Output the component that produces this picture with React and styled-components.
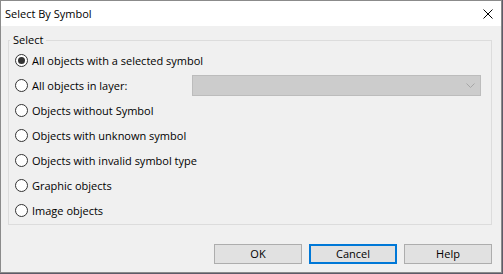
import React from "react";
import styled, { createGlobalStyle } from "styled-components";

const Global = createGlobalStyle`
  html, body { margin: 0; padding: 0; background: #5d5b68; }
  body { font-family: "Open Sans", "Noto Sans", "Liberation Sans", sans-serif; }
`;

const Window = styled.div`
  width: 500px;
  height: 271px;
  border: 1px solid #8b8b8b;
  display: flex;
  flex-direction: column;
  background: #f0f0f0;
  font-size: 11px;
  color: #000;
`;

const TitleBar = styled.div`
  height: 25px;
  flex: none;
  background: #fff;
  display: flex;
  align-items: center;
  justify-content: space-between;
  padding: 0 8px 0 4px;
  box-sizing: border-box;
`;

const Title = styled.span`
  font-size: 11px;
  line-height: 16px;
`;

const CloseBox = styled.div`
  width: 10px;
  height: 10px;
  display: flex;
`;

const Body = styled.div`
  flex: 1;
  display: flex;
  flex-direction: column;
  padding: 6px 9px 8px 7px;
`;

const Group = styled.fieldset`
  margin: 0;
  border: 1px solid #dcdcdc;
  padding: 0 10px 1px 6px;
  display: flex;
  flex-direction: column;
`;

const Legend = styled.legend`
  font-size: 11px;
  line-height: 16px;
  padding: 0 3px;
  margin-left: -5px;
`;

const Row = styled.label`
  height: 25px;
  display: flex;
  align-items: center;
  gap: 4px;
`;

const Radio = styled.span`
  width: 13px;
  height: 13px;
  box-sizing: border-box;
  border: 1px solid #333;
  border-radius: 50%;
  background: #fff;
  display: flex;
  align-items: center;
  justify-content: center;
  flex: none;
  &::after {
    content: "";
    width: 7px;
    height: 7px;
    border-radius: 50%;
    background: ${(p) => (p.$checked ? "#333" : "transparent")};
  }
`;

const Combo = styled.div`
  margin-left: auto;
  width: 289px;
  height: 21px;
  box-sizing: border-box;
  border: 1px solid #bcbcbc;
  background: #cccccc;
  display: flex;
  align-items: center;
  justify-content: flex-end;
  padding-right: 5px;
`;

const Footer = styled.div`
  margin-top: 19px;
  display: flex;
  justify-content: flex-end;
  gap: 7px;
`;

const Button = styled.button`
  width: 88px;
  height: 20px;
  box-sizing: border-box;
  border: ${(p) => (p.$default ? "2px solid #0078d7" : "1px solid #adadad")};
  background: #e1e1e1;
  font-family: inherit;
  font-size: 11px;
  color: #000;
  padding: 0;
  line-height: 16px;
`;

const options = [
  { label: "All objects with a selected symbol", checked: true },
  { label: "All objects in layer:", combo: true },
  { label: "Objects without Symbol" },
  { label: "Objects with unknown symbol" },
  { label: "Objects with invalid symbol type" },
  { label: "Graphic objects" },
  { label: "Image objects" },
];

export default function App() {
  return (
    <>
      <Global />
      <Window>
        <TitleBar>
          <Title>Select By Symbol</Title>
          <CloseBox>
            <svg width="10" height="10" viewBox="0 0 10 10">
              <path d="M0.5 0.5 L9.5 9.5 M9.5 0.5 L0.5 9.5" stroke="#000" strokeWidth="1" fill="none" />
            </svg>
          </CloseBox>
        </TitleBar>
        <Body>
          <Group>
            <Legend>Select</Legend>
            {options.map((o) => (
              <Row key={o.label}>
                <Radio $checked={o.checked} />
                <span>{o.label}</span>
                {o.combo && (
                  <Combo>
                    <svg width="9" height="5" viewBox="0 0 9 5">
                      <path d="M0.5 0.5 L4.5 4.5 L8.5 0.5" stroke="#a6a6a6" fill="none" />
                    </svg>
                  </Combo>
                )}
              </Row>
            ))}
          </Group>
          <Footer>
            <Button>OK</Button>
            <Button $default>Cancel</Button>
            <Button>Help</Button>
          </Footer>
        </Body>
      </Window>
    </>
  );
}
